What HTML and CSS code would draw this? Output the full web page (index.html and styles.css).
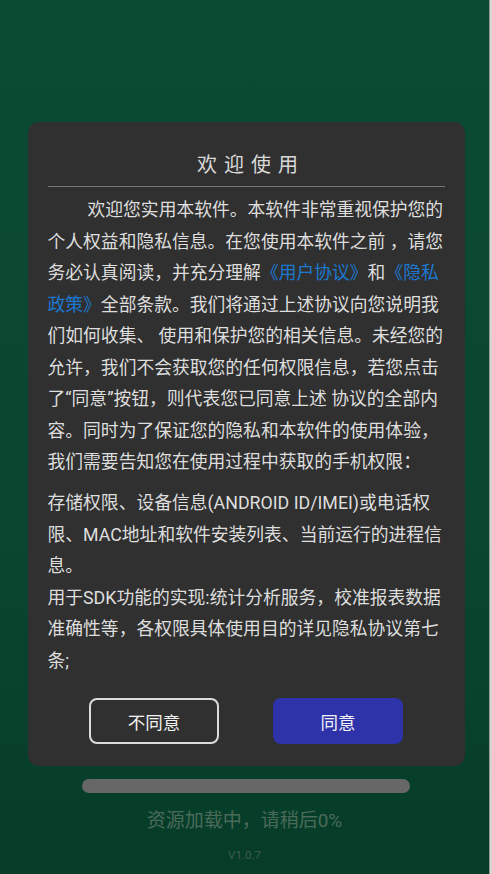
FILE: index.html
```html
<!DOCTYPE html>
<html lang="zh-CN">
<head>
<meta charset="UTF-8">
<title>欢迎使用</title>
<link rel="stylesheet" href="styles.css">
</head>
<body>
<div class="page">
	<div class="screen">
		<div class="dialog">
			<div class="title">欢迎使用</div>
			<div class="rule"></div>
			<div class="content">
				<p class="intro">欢迎您实用本软件。本软件非常重视保护您的个人权益和隐私信息。在您使用本软件之前 ，请您务必认真阅读，并充分理解<a href="#">《用户协议》</a>和<a href="#">《隐私政策》</a>全部条款。我们将通过上述协议向您说明我们如何收集、 使用和保护您的相关信息。未经您的允许，我们不会获取您的任何权限信息，若您点击了“同意”按钮，则代表您已同意上述 协议的全部内容。同时为了保证您的隐私和本软件的使用体验，我们需要告知您在使用过程中获取的手机权限：</p>
				<p class="perms">存储权限、设备信息(ANDROID ID/IMEI)或电话权限、MAC地址和软件安装列表、当前运行的进程信息。<br>用于SDK功能的实现:统计分析服务，校准报表数据准确性等，各权限具体使用目的详见隐私协议第七条;</p>
			</div>
			<div class="actions">
				<button class="btn btn-decline">不同意</button>
				<button class="btn btn-agree">同意</button>
			</div>
		</div>

		<div class="progress"><div class="progress-fill" style="width: 0%"></div></div>
		<div class="loading">资源加载中，请稍后0%</div>
		<div class="version">V1.0.7</div>
	</div>
	<div class="peek"></div>
</div>
</body>
</html>
```

FILE: styles.css
```css
html, body {
	margin: 0;
	padding: 0;
}

body {
	width: 492px;
	height: 874px;
	overflow: hidden;
	font-family: Roboto, "Noto Sans CJK SC", sans-serif;
	background: linear-gradient(to bottom, #0b4b32 0%, #0a4630 60%, #063c28 100%);
}

.page {
	display: flex;
	height: 874px;
}

.screen {
	width: 490px;
	padding-top: 122px;
	box-sizing: border-box;
	display: flex;
	flex-direction: column;
	align-items: center;
}

.peek {
	width: 2px;
	background: #d6d6d6;
	border-left: 1px solid #9a9a9a;
}

/* dialog */

.dialog {
	width: 437px;
	margin-left: 3px;
	background: #303030;
	border-radius: 11px;
	padding: 29px 0 22px 0;
	box-sizing: border-box;
}

.title {
	text-align: center;
	color: #d9d9d9;
	font-size: 20px;
	line-height: 28px;
	letter-spacing: 7px;
	padding-left: 10px;
}

.rule {
	height: 1px;
	background: #7b746e;
	margin: 7px 20px 0 20px;
}

.content {
	margin: 7px 20px 0 20px;
	color: #dedede;
	font-size: 17.8px;
	line-height: 31.5px;
}

.content p {
	margin: 0;
}

.content a {
	color: #1c78d0;
	text-decoration: none;
}

.intro {
	text-indent: 40px;
}

.perms {
	padding-top: 9.5px;
}

.actions {
	display: flex;
	justify-content: center;
	gap: 54px;
	margin-top: 22px;
}

.btn {
	width: 130px;
	height: 46px;
	border-radius: 8px;
	font-family: Roboto, "Noto Sans CJK SC", sans-serif;
	font-size: 17.5px;
	color: #f2f2f2;
	padding: 0;
}

.btn-decline {
	background: transparent;
	border: 2px solid #dcdcdc;
}

.btn-agree {
	background: #2f33aa;
	border: none;
}

/* loading */

.progress {
	width: 328px;
	height: 14px;
	margin-top: 13px;
	margin-left: 2px;
	border-radius: 7px;
	background: #676767;
	overflow: hidden;
}

.progress-fill {
	height: 100%;
	background: #2f33aa;
}

.loading {
	margin-top: 15px;
	color: #4b6a59;
	font-size: 19px;
	line-height: 26px;
}

.version {
	margin-top: 14px;
	color: #3f5e4d;
	font-size: 11.5px;
	line-height: 14px;
}
```
